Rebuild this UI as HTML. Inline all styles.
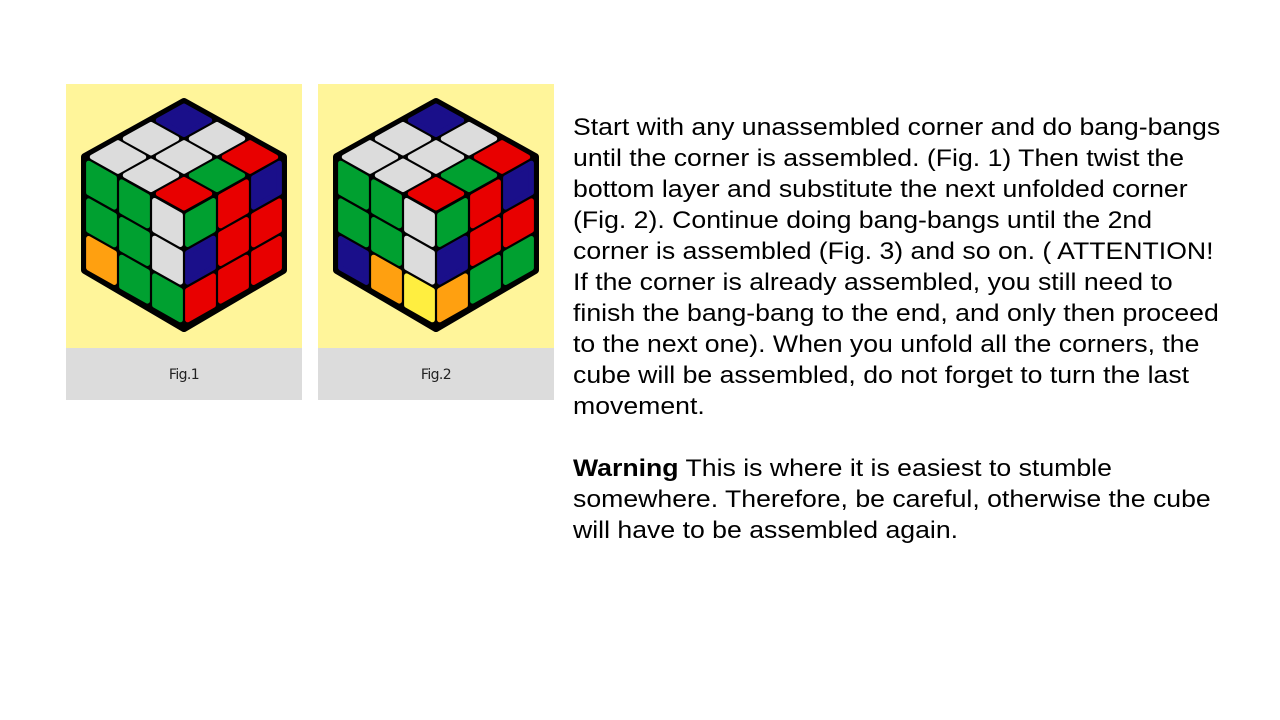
<!DOCTYPE html>
<html><head><meta charset="utf-8"><style>
html,body{margin:0;padding:0;background:#fff;width:1280px;height:720px;overflow:hidden}
.panel{position:absolute;top:84px;width:236px;height:316px;background:#fff59a}
.cap{position:absolute;left:0;top:264px;width:236px;height:52px;background:#dcdcdc;font:14px "DejaVu Sans","Liberation Sans",sans-serif;color:#222;text-align:center;line-height:54px;letter-spacing:-0.6px}
svg{position:absolute;left:0;top:0}
.txt{position:absolute;left:573px;top:112px;font:24px/31px "Liberation Sans",sans-serif;color:#000;white-space:nowrap;transform:scaleX(1.11);transform-origin:0 0}
</style></head><body>
<div class="panel" style="left:66px"><svg id="c1" width="236" height="264"></svg><div class="cap">Fig.1</div></div>
<div class="panel" style="left:318px"><svg id="c2" width="236" height="264"></svg><div class="cap">Fig.2</div></div>
<div class="txt">Start with any unassembled corner and do bang-bangs<br>until the corner is assembled. (Fig. 1) Then twist the<br>bottom layer and substitute the next unfolded corner<br>(Fig. 2). Continue doing bang-bangs until the 2nd<br>corner is assembled (Fig. 3) and so on. ( ATTENTION!<br>If the corner is already assembled, you still need to<br>finish the bang-bang to the end, and only then proceed<br>to the next one). When you unfold all the corners, the<br>cube will be assembled, do not forget to turn the last<br>movement.<br><br><b>Warning</b> This is where it is easiest to stumble<br>somewhere. Therefore, be careful, otherwise the cube<br>will have to be assembled again.</div>
<script>
var C={g:"#00a030",r:"#e80000",b:"#1a0f8a",w:"#dcdcdc",o:"#ffa010",y:"#ffee40"};
function cube(id,top,left,right){
 var T=[118,18],L=[19,73],R=[217,73],M=[118,129],B=[118,244],LB=[19,186],RB=[217,186];
 var s='<polygon points="'+[T,R,RB,B,LB,L].map(p=>p.join(',')).join(' ')+'" fill="#000" stroke="#000" stroke-width="8" stroke-linejoin="round"/>';
 function face(o,a,b,cols){
  for(var j=0;j<3;j++)for(var i=0;i<3;i++){
   var c=C[cols[j][i]],g=0.11,h=0.89;
   var pts=[[i+g,j+g],[i+h,j+g],[i+h,j+h],[i+g,j+h]].map(q=>(o[0]+q[0]*a[0]+q[1]*b[0]).toFixed(1)+','+(o[1]+q[0]*a[1]+q[1]*b[1]).toFixed(1)).join(' ');
   s+='<polygon points="'+pts+'" fill="'+c+'" stroke="'+c+'" stroke-width="5" stroke-linejoin="round"/>';
  }
 }
 face(T,[99/3,55/3],[-99/3,55/3],top);
 face(L,[99/3,56/3],[0,113/3],left);
 face(M,[99/3,-56/3],[0,113/3],right);
 document.getElementById(id).innerHTML=s;
}
cube("c1",[["b","w","r"],["w","w","g"],["w","w","r"]],
 [["g","g","w"],["g","g","w"],["o","g","g"]],
 [["g","r","b"],["b","r","r"],["r","r","r"]]);
cube("c2",[["b","w","r"],["w","w","g"],["w","w","r"]],
 [["g","g","w"],["g","g","w"],["b","o","y"]],
 [["g","r","b"],["b","r","r"],["o","g","g"]]);
</script>
</body></html>
